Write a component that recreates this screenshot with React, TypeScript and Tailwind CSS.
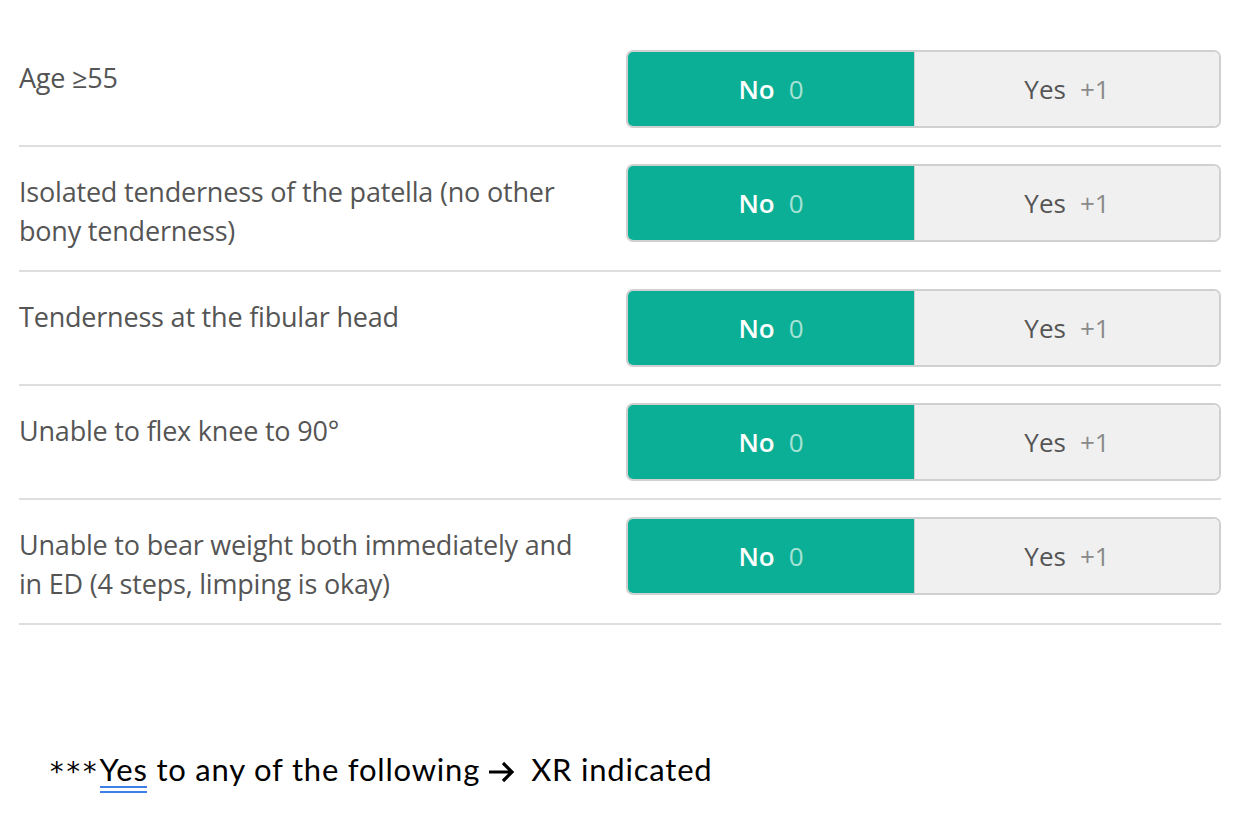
import React from "react";

const rows: string[] = [
  "Age \u226555",
  "Isolated tenderness of the patella (no other bony tenderness)",
  "Tenderness at the fibular head",
  "Unable to flex knee to 90\u00b0",
  "Unable to bear weight both immediately and in ED (4 steps, limping is okay)",
];

function Arrow() {
  return (
    <svg width="26" height="22" viewBox="0 0 26 22" className="inline-block w-[26px] h-[22px] ml-[9px] mr-[16px] align-[-2px]">
      <path d="M0 11 H23 M14 2 L23 11 L14 20" stroke="#000" strokeWidth="3.2" fill="none" />
    </svg>
  );
}

export default function App() {
  return (
    <div className="w-[1254px] h-[826px] bg-white relative" style={{ fontFamily: "'Open Sans', 'Noto Sans', sans-serif" }}>
      <div className="pl-[19px] pr-[33px] pt-[33px]">
        {rows.map((r, i) => (
          <div key={i} className="flex items-start pt-[17px] pb-[17px] border-b-2 border-[#dedede]">
            <div className="flex-1 pt-[8px] pb-[3px] pr-[28px] text-[27px] leading-[39px] text-[#555555] tracking-[-0.2px]">{r}</div>
            <div className="w-[595px] h-[78px] flex rounded-[7px] border-2 border-[#d0d0d0] overflow-hidden">
              <div className="w-[286px] bg-[#0aaf95] flex items-center justify-center text-[26px]">
                <span className="text-white font-semibold">No</span>
                <span className="ml-[14px] text-[#a5e3d6]">0</span>
              </div>
              <div className="flex-1 bg-[#f0f0f0] border-l border-[#d0d0d0] flex items-center justify-center text-[26px]">
                <span className="text-[#555555]">Yes</span>
                <span className="ml-[14px] text-[#8a8a8a]">+1</span>
              </div>
            </div>
          </div>
        ))}
      </div>
      <div className="absolute left-[50px] top-[746px] text-[31px] tracking-[0.8px] text-black whitespace-nowrap" style={{ fontFamily: "Lato, 'Open Sans', sans-serif" }}>
        <span className="tracking-[3px]" style={{ fontFamily: "'DejaVu Sans', sans-serif", fontSize: "27px" }}>***</span>
        <span className="relative">
          Yes
          <span className="absolute left-0 right-[1px] top-[36px] h-[7px] border-y-2 border-[#3d7fe6]"></span>
        </span>{" "}
        to any of the following<Arrow />XR indicated
      </div>
    </div>
  );
}
